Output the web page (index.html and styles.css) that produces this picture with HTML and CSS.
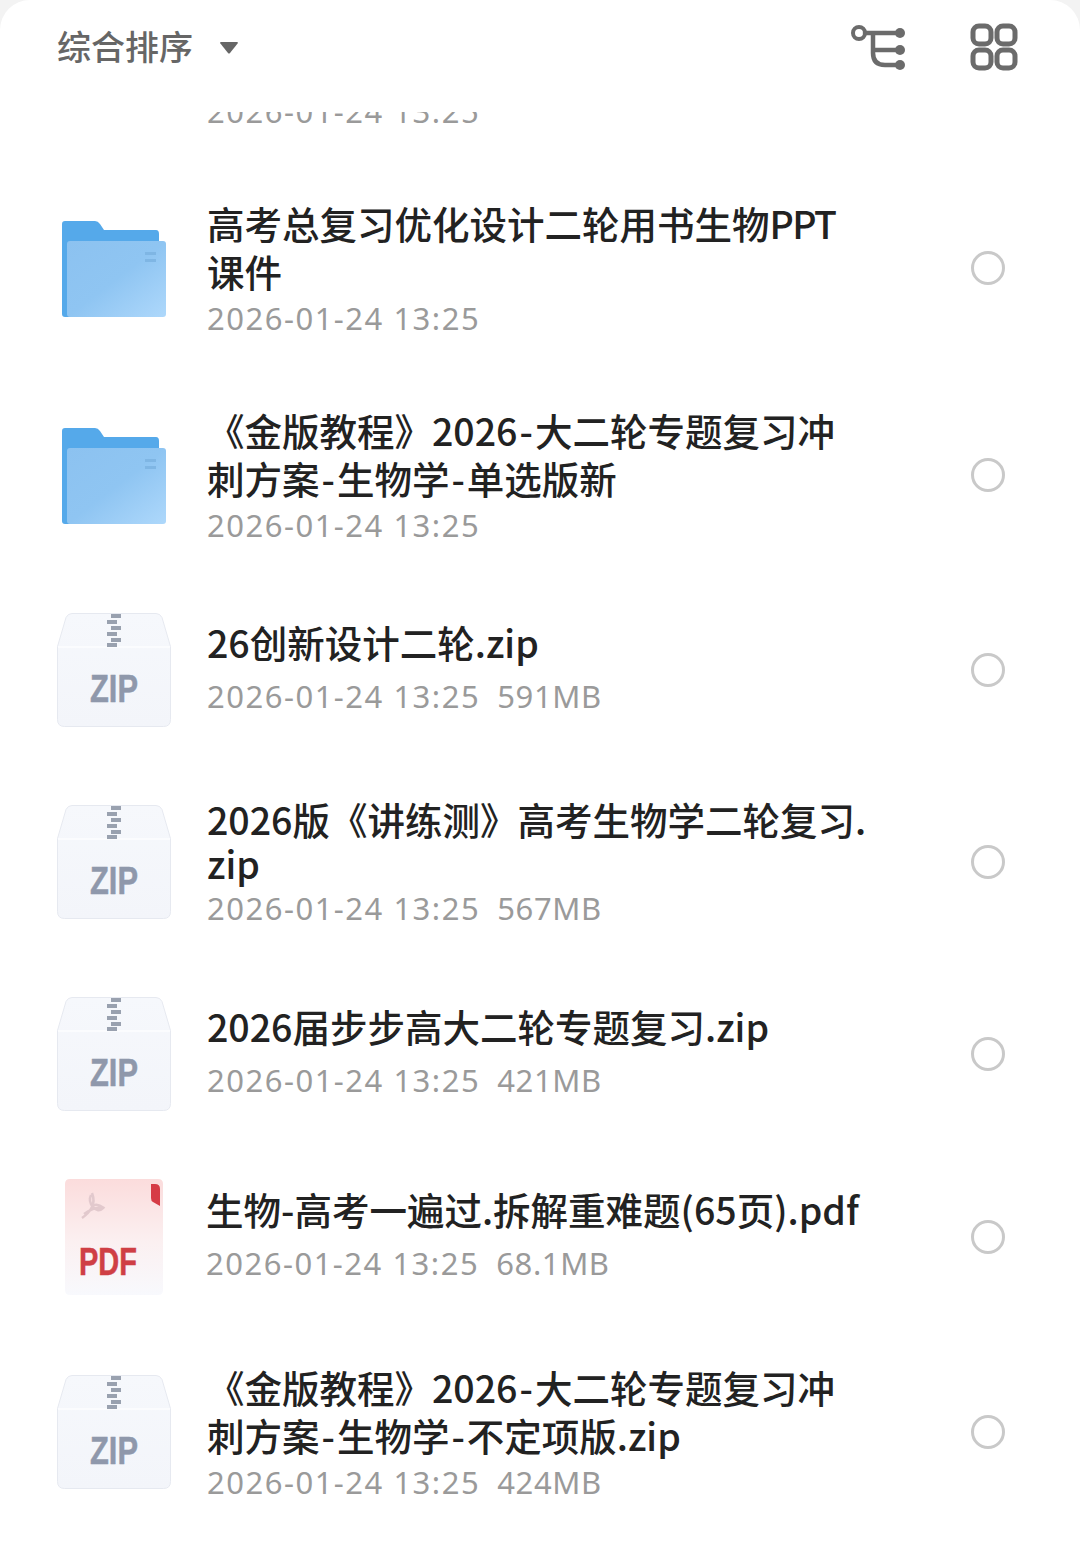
FILE: index.html
```html
<!DOCTYPE html>
<html lang="zh-CN">
<head>
  <meta charset="UTF-8">
  <meta name="viewport" content="width=device-width, initial-scale=1.0">
  <title>文件列表</title>
  <link rel="stylesheet" href="styles.css">
</head>
<body>

<svg class="defs" width="0" height="0" aria-hidden="true">
  <defs>
    <linearGradient id="folderFront" x1="0" y1="0" x2="1" y2="1">
      <stop offset="0" stop-color="#8cc2f0"/>
      <stop offset="0.5" stop-color="#8fc5f2"/>
      <stop offset="1" stop-color="#aed8fb"/>
    </linearGradient>
    <linearGradient id="zipBody" x1="0" y1="0" x2="0" y2="1">
      <stop offset="0" stop-color="#f6f8fc"/>
      <stop offset="1" stop-color="#f3f5fa"/>
    </linearGradient>
    <linearGradient id="pdfBody" x1="0" y1="0" x2="0" y2="1">
      <stop offset="0" stop-color="#fbdcdc"/>
      <stop offset="0.55" stop-color="#fbf0f1"/>
      <stop offset="1" stop-color="#f8f9fd"/>
    </linearGradient>
    <symbol id="folder" viewBox="0 0 104 96">
      <path d="M0 3q0-3 3-3h30q3 0 5 3l4 6h52q3 0 3 4v83H3q-3 0-3-3z" fill="#55a9ea"/>
      <rect x="5" y="20" width="99" height="76" rx="3" fill="url(#folderFront)"/>
      <rect x="83" y="31" width="11" height="3" fill="#7fb6e4"/>
      <rect x="83" y="38" width="11" height="3" fill="#7fb6e4"/>
    </symbol>
    <symbol id="zip" viewBox="0 0 114 114">
      <path d="M15 .5h84q4 0 6 4l8.500 29v73q0 7-7 7H7.500q-7 0-7-7v-73l8.500-29q2-4 6-4z" fill="url(#zipBody)" stroke="#e6e9f0" stroke-width="1"/>
      <path d="M1 34h112" stroke="#fbfcfe" stroke-width="2"/>
      <g fill="#99a1af">
        <rect x="54" y="1" width="10" height="4"/><rect x="50" y="7" width="10" height="4"/>
        <rect x="54" y="13" width="10" height="4"/><rect x="50" y="19" width="10" height="4"/>
        <rect x="54" y="25" width="10" height="4"/><rect x="50" y="30" width="10" height="4"/>
      </g>
      <text x="57" y="89" text-anchor="middle" textLength="48" lengthAdjust="spacingAndGlyphs" class="zip-label">ZIP</text>
    </symbol>
    <symbol id="pdf" viewBox="0 0 98 116">
      <path d="M5 0h88q5 0 5 5v106q0 5-5 5H5q-5 0-5-5V5q0-5 5-5z" fill="url(#pdfBody)"/>
      <path d="M86 5h4q5 0 5 5v17l-7-4q-2-1-2-4z" fill="#d63c46"/>
      <path d="M27 14q3 8 0 14t-10 11M27 28q3-5 12 1M26 16q-3 6 2 12t10 1q-7-2-19 6" fill="none" stroke="#e2c9cd" stroke-width="2.500"/>
      <text x="43" y="96" text-anchor="middle" textLength="58" lengthAdjust="spacingAndGlyphs" class="pdf-label">PDF</text>
    </symbol>
  </defs>
</svg>

<div class="sheet">
  <header class="toolbar">
    <div class="sort">
      <span class="sort-label">综合排序</span>
      <svg class="caret" width="20" height="14" viewBox="0 0 20 14"><path d="M2 1h16q1.500 0 .6 1.400L11 12q-1 1-2 0L1.400 2.400Q.5 1 2 1z" fill="#666"/></svg>
    </div>
    <div class="tools">
      <svg class="tool" width="58" height="50" viewBox="0 0 58 50" fill="none" stroke="#6b6b6b" stroke-width="4.500" stroke-linecap="round">
        <circle cx="9" cy="11" r="6" stroke-width="4"/>
        <path d="M15 11H50M23 11V31Q23 43 35 43H50M23 28H50"/>
        <g fill="#6b6b6b" stroke="none">
          <circle cx="50" cy="11" r="5"/><circle cx="50" cy="28" r="5"/><circle cx="50" cy="43" r="5"/>
        </g>
      </svg>
      <svg class="tool" width="48" height="48" viewBox="0 0 48 48" fill="none" stroke="#6b6b6b" stroke-width="5">
        <rect x="3" y="3" width="18" height="18" rx="6"/><rect x="27" y="3" width="18" height="18" rx="6"/>
        <rect x="3" y="27" width="18" height="18" rx="6"/><rect x="27" y="27" width="18" height="18" rx="6"/>
      </svg>
    </div>
  </header>

  <div class="clipped"><div class="date">2026-01-24 13:25</div></div>

  <ul class="files">
    <li class="row tall">
      <svg class="icon"><use href="#folder"/></svg>
      <div class="info"><div class="name">高考总复习优化设计二轮用书生物<span class="latin">PPT</span><br>课件</div><div class="date">2026-01-24 13:25</div></div>
      <span class="radio"></span>
    </li>
    <li class="row tall">
      <svg class="icon"><use href="#folder"/></svg>
      <div class="info"><div class="name">《金版教程》2026<span class="dash">-</span>大二轮专题复习冲<br>刺方案<span class="dash">-</span>生物学<span class="dash">-</span>单选版新</div><div class="date">2026-01-24 13:25</div></div>
      <span class="radio"></span>
    </li>
    <li class="row">
      <svg class="icon zip"><use href="#zip"/></svg>
      <div class="info"><div class="name">26创新设计二轮.zip</div><div class="date spaced">2026-01-24 13:25&nbsp; <span class="size">591MB</span></div></div>
      <span class="radio"></span>
    </li>
    <li class="row tall tight">
      <svg class="icon zip"><use href="#zip"/></svg>
      <div class="info"><div class="name">2026版《讲练测》高考生物学二轮复习.<br>zip</div><div class="date">2026-01-24 13:25&nbsp; <span class="size">567MB</span></div></div>
      <span class="radio"></span>
    </li>
    <li class="row">
      <svg class="icon zip"><use href="#zip"/></svg>
      <div class="info"><div class="name">2026届步步高大二轮专题复习.zip</div><div class="date spaced">2026-01-24 13:25&nbsp; <span class="size">421MB</span></div></div>
      <span class="radio"></span>
    </li>
    <li class="row">
      <svg class="icon pdf"><use href="#pdf"/></svg>
      <div class="info"><div class="name">生物-高考一遍过.拆解重难题(65页).pdf</div><div class="date spaced">2026-01-24 13:25&nbsp; <span class="size">68.1MB</span></div></div>
      <span class="radio"></span>
    </li>
    <li class="row tall">
      <svg class="icon zip"><use href="#zip"/></svg>
      <div class="info"><div class="name">《金版教程》2026<span class="dash">-</span>大二轮专题复习冲<br>刺方案<span class="dash">-</span>生物学<span class="dash">-</span>不定项版.zip</div><div class="date">2026-01-24 13:25&nbsp; <span class="size">424MB</span></div></div>
      <span class="radio"></span>
    </li>
  </ul>
</div>

</body>
</html>
```

FILE: styles.css
```css
* {
  box-sizing: border-box;
}
html, body {
  margin: 0;
  height: 100%;
  background-color: #f3f3f3;
}
body {
  font-family: "Noto Sans CJK SC", "Noto Sans", sans-serif;
  overflow: hidden;
}
.defs {
  position: absolute;
}
.sheet {
  height: 100%;
  background-color: #fff;
  border-radius: 30px 30px 0 0;
}
.toolbar {
  height: 112px;
  padding: 0 62px 18px 57px;
  display: flex;
  align-items: center;
  justify-content: space-between;
}
.sort {
  display: flex;
  align-items: center;
  gap: 26px;
  font-size: 34px;
  font-weight: 500;
  color: #666;
}
.sort-label {
  margin-bottom: 4px;
}
.caret {
  margin-top: 2px;
}
.tools {
  display: flex;
  align-items: center;
  gap: 62px;
}
.clipped {
  height: 15px;
  padding-left: 207px;
  overflow: hidden;
  display: flex;
  align-items: flex-end;
}
.clipped .date {
  flex: none;
  margin-bottom: -7px;
}
.files {
  list-style: none;
  margin: 37px 0 0;
  padding: 0 75px 0 57px;
}
.row {
  height: 183px;
  display: flex;
  align-items: center;
}
.row.tall {
  height: 207px;
}
.row.tight {
  height: 201px;
}
.icon {
  flex: none;
  width: 104px;
  height: 96px;
  margin: 3px 41px 0 5px;
}
.icon.zip {
  width: 114px;
  height: 114px;
  margin: 0 36px 0 0;
}
.icon.pdf {
  width: 98px;
  height: 116px;
  margin: 0 43px 0 8px;
}
.info {
  flex: 1;
  padding-top: 5px;
}
.row:not(.tall) .info {
  padding-top: 0;
  padding-bottom: 3px;
}
.name {
  font-size: 37.5px;
  line-height: 48px;
  color: #222;
  font-weight: 500;
  white-space: nowrap;
}
.tight .name {
  line-height: 44px;
}
.dash {
  margin: 0 2px;
}
.latin {
  letter-spacing: -1.6px;
}
.date {
  font-family: "Noto Sans", sans-serif;
  font-size: 31px;
  line-height: 46px;
  color: #9a9a9a;
  letter-spacing: 1.5px;
  white-space: nowrap;
}
.date.spaced {
  margin-top: 7px;
}
.size {
  margin-left: -2px;
  letter-spacing: 0.6px;
}
.radio {
  flex: none;
  width: 34px;
  height: 34px;
  border: 3px solid #c9c9c9;
  border-radius: 50%;
}
.zip-label {
  font-family: "Liberation Sans", sans-serif;
  font-weight: 700;
  font-size: 38px;
  fill: #8f98ab;
  stroke: #8f98ab;
  stroke-width: 0.5;
}
.pdf-label {
  font-family: "Liberation Sans", sans-serif;
  font-weight: 700;
  font-size: 38px;
  fill: #cf3f45;
  stroke: #cf3f45;
  stroke-width: 0.5;
}
```
